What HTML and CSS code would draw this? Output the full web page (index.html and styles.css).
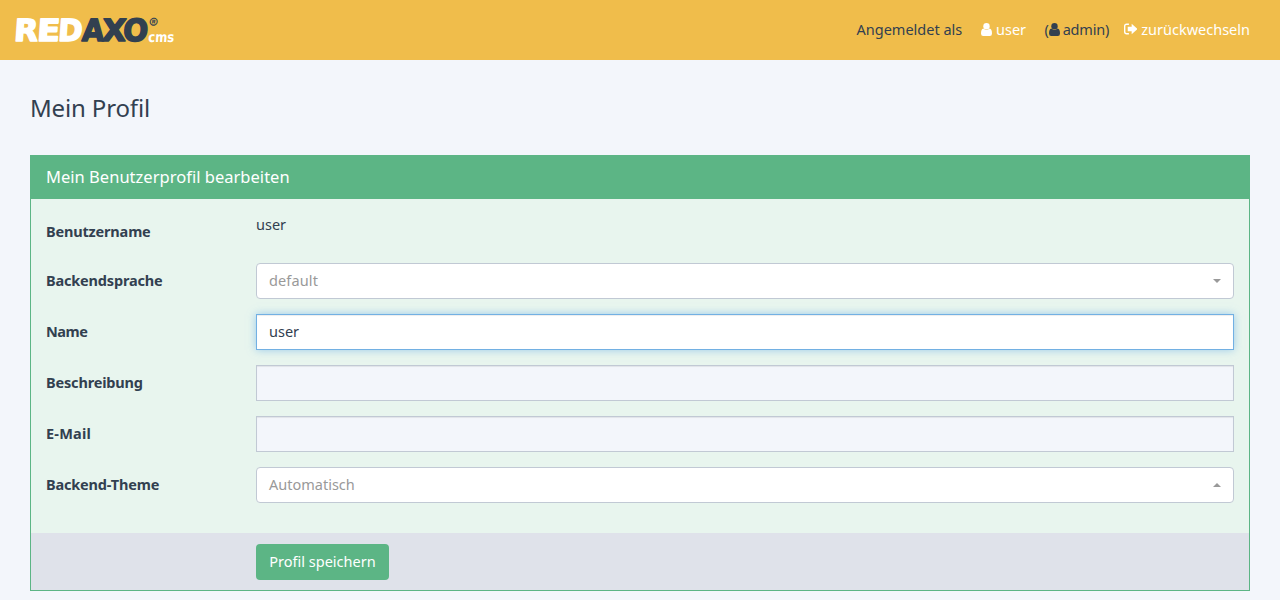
FILE: index.html
```html
<!DOCTYPE html>
<html lang="de">
<head>
<meta charset="utf-8">
<title>Mein Profil</title>
<link rel="stylesheet" href="styles.css">
</head>
<body>
<header class="navbar">
  <svg class="logo" width="180" height="60" viewBox="0 0 180 60" role="img" aria-label="REDAXO cms">
    <g transform="translate(0 42) skewX(-4)">
      <text class="logo-word logo-light" x="13.5" y="-1" textLength="24" lengthAdjust="spacingAndGlyphs">R</text>
      <text class="logo-word logo-light" x="36.5" y="-1" textLength="23" lengthAdjust="spacingAndGlyphs">E</text>
      <text class="logo-word logo-light" x="57.5" y="-1" textLength="24.5" lengthAdjust="spacingAndGlyphs">D</text>
      <text class="logo-word logo-dark" x="81.5" y="-1" textLength="22" lengthAdjust="spacingAndGlyphs">A</text>
      <text class="logo-word logo-dark" x="101.5" y="-1" textLength="24" lengthAdjust="spacingAndGlyphs">X</text>
      <text class="logo-word logo-dark" x="122.5" y="-1" textLength="25" lengthAdjust="spacingAndGlyphs">O</text>
      <text class="logo-cms" x="148" y="-.5" textLength="26" lengthAdjust="spacingAndGlyphs">cms</text>
      <text class="logo-reg" x="147.5" y="-14">®</text>
    </g>
  </svg>
  <ul class="meta">
    <li class="meta-label">Angemeldet als</li>
    <li class="meta-user"><svg class="icon-user" width="11" height="13" viewBox="0 0 11 13"><circle cx="5.5" cy="3.2" r="3.2"/><path d="M2.4 5.6Q5.5 8.4 8.6 5.6Q11 6.1 11 10.5Q11 13 8.8 13H2.2Q0 13 0 10.5Q0 6.1 2.4 5.6Z"/></svg><span>user</span></li>
    <li class="meta-admin">(<svg class="icon-user" width="11" height="13" viewBox="0 0 11 13"><circle cx="5.5" cy="3.2" r="3.2"/><path d="M2.4 5.6Q5.5 8.4 8.6 5.6Q11 6.1 11 10.5Q11 13 8.8 13H2.2Q0 13 0 10.5Q0 6.1 2.4 5.6Z"/></svg><span>admin)</span></li>
    <li class="meta-back"><svg class="icon-out" width="14" height="12" viewBox="0 0 14 11"><path class="frame" d="M5 .7H2.7Q.7.7.7 2.7V8.3Q.7 10.3 2.7 10.3H5"/><path d="M3.8 3.3H7.8V.2L13.8 5.5L7.8 10.8V7.7H3.8Z"/></svg><span>zurückwechseln</span></li>
  </ul>
</header>
<main class="page">
  <h1 class="title">Mein Profil</h1>
  <section class="panel">
    <h2 class="panel-heading">Mein Benutzerprofil bearbeiten</h2>
    <div class="panel-body">
      <div class="row row-static"><span class="label">Benutzername</span><span class="static">user</span></div>
      <div class="row"><span class="label">Backendsprache</span><div class="field select"><span class="value v-default">default</span><i class="caret"></i></div></div>
      <div class="row"><span class="label l-name">Name</span><div class="field input focused"><span class="value">user</span></div></div>
      <div class="row"><span class="label">Beschreibung</span><div class="field input"></div></div>
      <div class="row"><span class="label l-mail">E-Mail</span><div class="field input"></div></div>
      <div class="row"><span class="label">Backend-Theme</span><div class="field select"><span class="value">Automatisch</span><i class="caret caret-up"></i></div></div>
    </div>
    <footer class="panel-footer"><button class="save">Profil speichern</button></footer>
  </section>
</main>
</body>
</html>
```
FILE: styles.css
```css
* { box-sizing: border-box; }
body {
  margin: 0;
  height: 600px;
  overflow: hidden;
  background: #f3f6fb;
  color: #324050;
  font: 14.5px/20px "Noto Sans", sans-serif;
}
.navbar {
  display: flex;
  justify-content: space-between;
  align-items: center;
  height: 60px;
  padding-right: 30px;
  background: #f0bd4b;
}
.logo { display: block; }
.logo-word { font: 700 30.5px "DejaVu Sans", sans-serif; stroke-width: 1.6px; stroke-linejoin: round; }
.logo-light { fill: #fff; stroke: #fff; }
.logo-dark { fill: #324050; stroke: #324050; }
.logo-cms { font: 700 14px "DejaVu Sans", sans-serif; fill: #fff; }
.logo-reg { font: 700 14px Inter, sans-serif; fill: #324050; }
.meta { display: flex; margin: 0; padding: 0 0 2px; list-style: none; }
.meta li { display: flex; align-items: center; white-space: nowrap; }
.meta svg { fill: currentColor; }
.meta-label { width: 124.5px; }
.meta-user { width: 63.5px; gap: 4px; color: #fff; }
.meta-admin { width: 79px; letter-spacing: -.2px; }
.meta-admin span { margin-left: 3px; }
.meta-back { width: 126.5px; gap: 4px; color: #fff; }
.frame { fill: none; stroke: currentColor; stroke-width: 1.4; }
.page { padding: 0 30px; }
.title { margin: 0; padding-top: 33px; height: 95px; font-size: 24px; line-height: 30px; font-weight: 400; letter-spacing: -.15px; }
.panel { border: 1px solid #5cb585; }
.panel-heading {
  margin: 0;
  height: 43px;
  padding: 0 15px;
  background: #5cb585;
  color: #fff;
  font-size: 16.5px;
  font-weight: 400;
  line-height: 41px;
  letter-spacing: .02px;
}
.panel-body { height: 334px; padding: 15px; background: #e8f5ee; }
.row { display: grid; grid-template-columns: 210px 1fr; align-items: center; height: 36px; margin-bottom: 15px; }
.row-static { height: 34px; }
.row-static .label { padding-top: 1px; }
.static { padding-bottom: 14px; }
.label { padding-bottom: 2px; font-weight: 700; letter-spacing: -.17px; }
.l-name { letter-spacing: -.45px; }
.l-mail { letter-spacing: .2px; }
.field {
  display: flex;
  justify-content: space-between;
  align-items: center;
  height: 36px;
  padding: 0 12px;
  border: 1px solid #c1c9d4;
}
.value { padding-bottom: 2px; }
.v-default { letter-spacing: .12px; }
.input { background: #f3f6fb; box-shadow: inset 0 1px 1px rgba(0, 0, 0, .075); }
.focused { background: #fff; border-color: #72b0e3; box-shadow: inset 0 1px 1px rgba(0, 0, 0, .075), 0 0 8px rgba(102, 175, 233, .6); }
.select { border-radius: 4px; background: #fff; color: #999; }
.caret { border: 4px solid transparent; border-top-color: #999; border-bottom: 0; }
.caret-up { border: 4px solid transparent; border-bottom-color: #999; border-top: 0; }
.panel-footer { height: 57px; padding: 11px 225px; background: #dfe2ea; }
.save {
  display: block;
  width: 133px;
  height: 36px;
  padding: 0 0 2px;
  border: 0;
  border-radius: 4px;
  background: #5cb585;
  color: #fff;
  font: inherit;
}
```
